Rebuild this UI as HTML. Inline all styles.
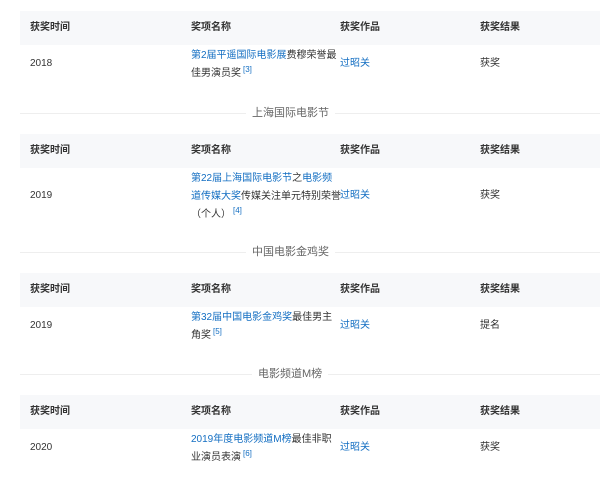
<!DOCTYPE html>
<html><head><meta charset="utf-8"><style>
body{margin:0;width:600px;height:481px;background:#fff;font-family:"Liberation Sans","Noto Sans CJK SC",sans-serif;font-size:10px;color:#333;position:relative;overflow:hidden}
.h{position:absolute;left:20px;width:580px;height:34px;background:#f7f8fa}
.t{position:absolute;white-space:nowrap;line-height:18px}
.b{font-weight:bold}
a{color:#136ec2;text-decoration:none}
sup{font-size:8px;color:#136ec2;vertical-align:4px;line-height:0;margin-left:2px}
.line{position:absolute;left:20px;width:580px;height:1px;background:#eee}
.sec{position:absolute;font-size:11px;color:#666;background:#fff;padding:0 6px;line-height:14px}
</style></head><body>
<div class="h" style="top:11px"></div>
<div class="t b" style="left:30px;top:19px">获奖时间</div><div class="t b" style="left:191px;top:19px">奖项名称</div><div class="t b" style="left:340px;top:19px">获奖作品</div><div class="t b" style="left:480px;top:19px">获奖结果</div>
<div class="t" style="left:30px;top:55px">2018</div>
<div class="t" style="left:191px;top:47px"><a>第2届平遥国际电影展</a>费穆荣誉最<br>佳男演员奖<sup>[3]</sup></div>
<div class="t" style="left:340px;top:55px"><a>过昭关</a></div><div class="t" style="left:480px;top:55px">获奖</div>

<div class="line" style="top:113px"></div><div class="sec" style="left:246px;top:106px">上海国际电影节</div>
<div class="h" style="top:134px"></div>
<div class="t b" style="left:30px;top:142px">获奖时间</div><div class="t b" style="left:191px;top:142px">奖项名称</div><div class="t b" style="left:340px;top:142px">获奖作品</div><div class="t b" style="left:480px;top:142px">获奖结果</div>
<div class="t" style="left:30px;top:187px">2019</div>
<div class="t" style="left:191px;top:170px"><a>第22届上海国际电影节</a>之<a>电影频<br>道传媒大奖</a>传媒关注单元特别荣誉<br>（个人）<sup>[4]</sup></div>
<div class="t" style="left:340px;top:187px"><a>过昭关</a></div><div class="t" style="left:480px;top:187px">获奖</div>

<div class="line" style="top:252px"></div><div class="sec" style="left:246px;top:245px">中国电影金鸡奖</div>
<div class="h" style="top:273px"></div>
<div class="t b" style="left:30px;top:281px">获奖时间</div><div class="t b" style="left:191px;top:281px">奖项名称</div><div class="t b" style="left:340px;top:281px">获奖作品</div><div class="t b" style="left:480px;top:281px">获奖结果</div>
<div class="t" style="left:30px;top:317px">2019</div>
<div class="t" style="left:191px;top:309px"><a>第32届中国电影金鸡奖</a>最佳男主<br>角奖<sup>[5]</sup></div>
<div class="t" style="left:340px;top:317px"><a>过昭关</a></div><div class="t" style="left:480px;top:317px">提名</div>

<div class="line" style="top:374px"></div><div class="sec" style="left:252px;top:367px">电影频道M榜</div>
<div class="h" style="top:395px"></div>
<div class="t b" style="left:30px;top:403px">获奖时间</div><div class="t b" style="left:191px;top:403px">奖项名称</div><div class="t b" style="left:340px;top:403px">获奖作品</div><div class="t b" style="left:480px;top:403px">获奖结果</div>
<div class="t" style="left:30px;top:439px">2020</div>
<div class="t" style="left:191px;top:431px"><a>2019年度电影频道M榜</a>最佳非职<br>业演员表演<sup>[6]</sup></div>
<div class="t" style="left:340px;top:439px"><a>过昭关</a></div><div class="t" style="left:480px;top:439px">获奖</div>
</body></html>
